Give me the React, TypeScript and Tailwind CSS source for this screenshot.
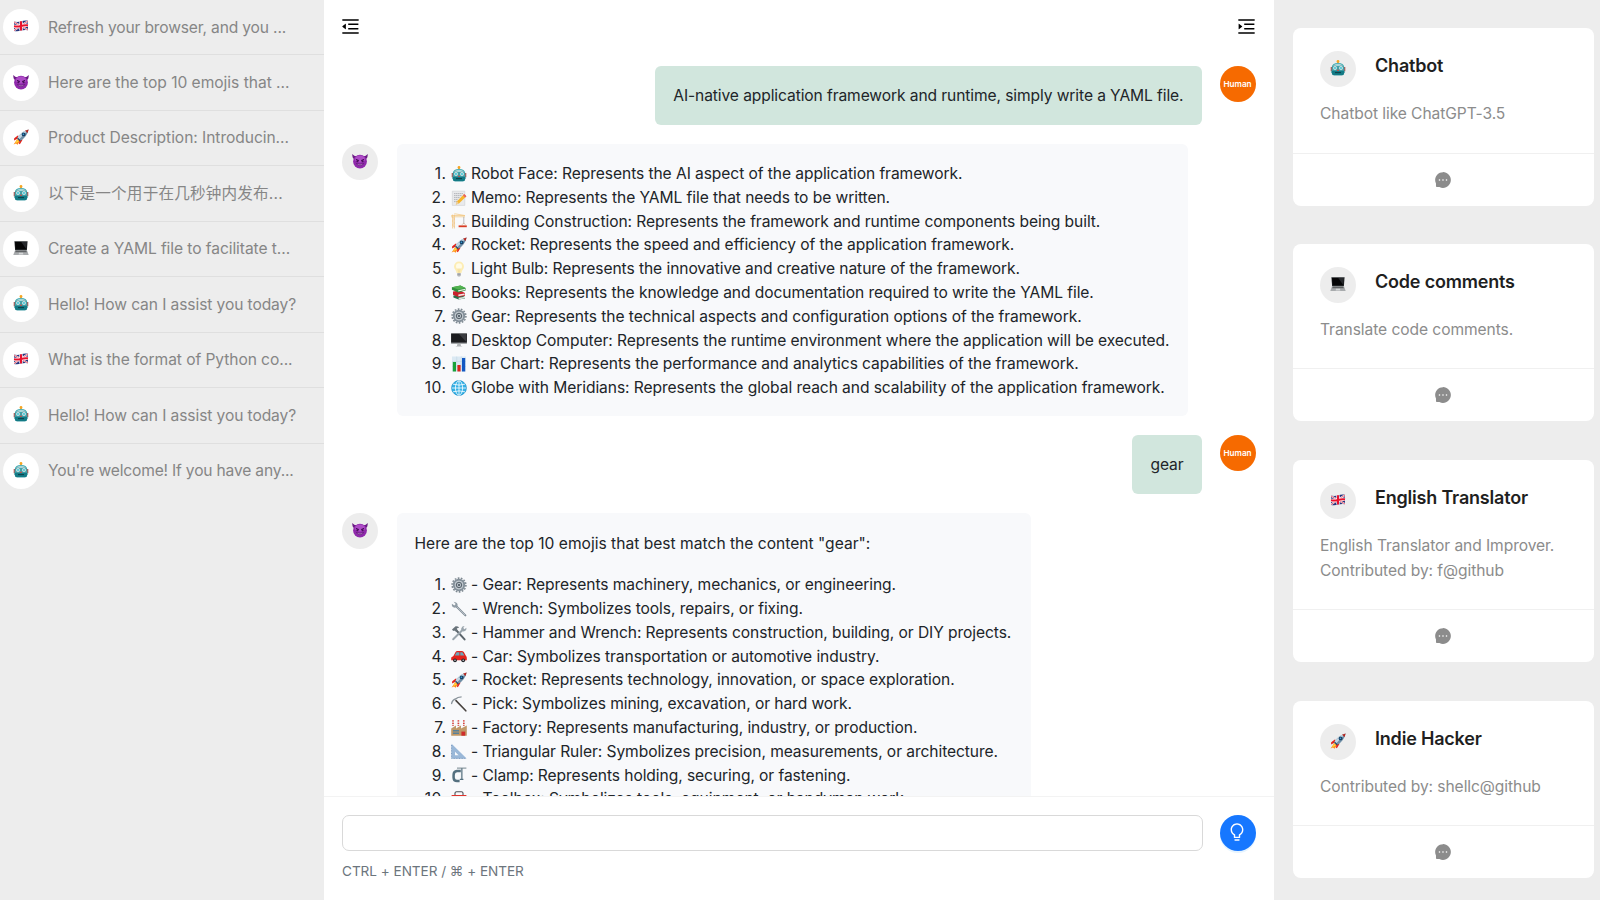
import type { ReactNode } from "react";
import { AiFillMessage, AiOutlineBulb, AiOutlineMenuFold, AiOutlineMenuUnfold } from "react-icons/ai";

type EmojiName =
  | "flag" | "devil" | "rocket" | "robot" | "laptop" | "memo" | "crane" | "bulb" | "books" | "gear"
  | "desktop" | "chart" | "globe" | "wrench" | "tools" | "car" | "pick" | "factory" | "ruler" | "clamp" | "toolbox";

const drawings: Record<EmojiName, ReactNode> = {
  flag: (
    <g>
      <path d="M1 3.6Q4.5 4.6 8 3.3T15 2.6V12.2Q11.5 11.4 8 12.6T1 12.9Z" fill="#27347d" />
      <path d="M1 4L15 12M1 12.6L15 3" stroke="#fff" strokeWidth="1.8" />
      <path d="M1 4L15 12M1 12.6L15 3" stroke="#e0142f" strokeWidth=".7" />
      <path d="M8 3.3V12.6M1 8.2Q4.5 8.8 8 7.9T15 7.4" stroke="#fff" strokeWidth="3.4" fill="none" />
      <path d="M8 3.3V12.6M1 8.2Q4.5 8.8 8 7.9T15 7.4" stroke="#e8112d" strokeWidth="2.1" fill="none" />
    </g>
  ),
  devil: (
    <g>
      <path d="M.3 .9Q.1 5.4 2.8 6.5L5 3.4Q1.8 3.2 .3 .9ZM15.7 .9Q15.9 5.4 13.2 6.5L11 3.4Q14.2 3.2 15.7 .9Z" fill="#6a1a83" />
      <circle cx="8" cy="8.6" r="6.9" fill="#8f29ab" />
      <ellipse cx="8" cy="6" rx="5.2" ry="3.6" fill="#ad4cc6" />
      <path d="M3.8 6.2L7 7.6M12.2 6.2L9 7.6" stroke="#4b0e5e" strokeWidth="1" />
      <circle cx="5.4" cy="8.2" r="1.1" fill="#4b0e5e" />
      <circle cx="10.6" cy="8.2" r="1.1" fill="#4b0e5e" />
      <path d="M4.2 10.5Q8 14.6 11.8 10.5Q8 12.3 4.2 10.5Z" fill="#e7c7ef" stroke="#4b0e5e" strokeWidth=".5" />
    </g>
  ),
  rocket: (
    <g>
      <path d="M4.3 10L.6 15.4L3 14.6L4.6 15.8L7 12Z" fill="#ff8d1c" />
      <path d="M4 11L2 14.4L6 12.3Z" fill="#ffdf3d" />
      <path d="M5.2 6.3L1.2 9.2L1 11.4L5 9.6ZM9.7 10.6L7.2 14.8L6 15.2L6.4 11Z" fill="#e2231a" />
      <path d="M4.2 9.6Q7 3 15.6 .4Q14.2 7.9 6.9 12.1Z" fill="#6f8fa6" />
      <path d="M4.2 9.6Q7 3 15.6 .4L5.5 10.9Z" fill="#c3d6e2" />
      <path d="M12 1.7L15.6 .4L14.6 4.1Z" fill="#b5271f" />
      <circle cx="10.6" cy="5.4" r="1.9" fill="#173e63" />
      <circle cx="10.4" cy="5.2" r=".8" fill="#3aa9de" />
      <path d="M4.6 9.1L7.2 11.8" stroke="#24455f" strokeWidth="1.2" />
    </g>
  ),
  robot: (
    <g>
      <path d="M8 1.4V4" stroke="#8a5a25" strokeWidth="1" />
      <circle cx="8" cy="1.5" r="1.4" fill="#f6a623" />
      <path d="M.7 7H2.4V11.2H.7ZM13.6 7H15.3V11.2H13.6Z" fill="#b9524d" />
      <path d="M1.8 7Q2.4 3.2 8 3.1T14.2 7L14.4 12.6Q14 15.2 12 15.3H4Q2 15.2 1.6 12.6Z" fill="#3fa9b0" />
      <path d="M1.7 10.8H14.3L14.4 12.6Q14 15.3 12 15.3H4Q2 15.3 1.6 12.6Z" fill="#137a85" />
      <path d="M3 5.9Q4.5 3.8 8 3.7T13 5.9Z" fill="#a8d5d8" />
      <circle cx="5" cy="8" r="2.2" fill="#d9fbfb" stroke="#45717a" strokeWidth=".5" />
      <circle cx="11" cy="8" r="2.2" fill="#d9fbfb" stroke="#45717a" strokeWidth=".5" />
      <circle cx="5" cy="8" r=".9" fill="#28b9cc" />
      <circle cx="11" cy="8" r=".9" fill="#28b9cc" />
      <path d="M8 9L9 11H7Z" fill="#e33c35" />
      <path d="M5 12.6H11" stroke="#0d424b" strokeWidth="1.1" />
    </g>
  ),
  laptop: (
    <g>
      <path d="M1.4 1.3H14.6L13.9 9.9H2.1Z" fill="#25282b" />
      <path d="M2 1.9H14L13.4 9.2H2.6Z" fill="#050506" />
      <path d="M8.2 1.9H14L13.4 9.2Z" fill="#26282c" />
      <path d="M2.1 9.9H13.9L15.7 15H.3Z" fill="#a8abad" />
      <path d="M2.8 10.5H13.2L13.9 12.2H2.1Z" fill="#5f6264" />
      <path d="M6 12.8H10L10.3 14.4H5.7Z" fill="#d4d6d7" />
    </g>
  ),
  memo: (
    <g>
      <path d="M1.3 1.2H13.8V15.4H1.3Z" fill="#e9eaec" stroke="#c7c9cc" strokeWidth=".5" />
      <path d="M3 3.6H12M3 5.6H11M3 7.6H9M3 9.6H7M3 11.6H6" stroke="#9da1a6" strokeWidth=".7" strokeDasharray="1.6 .4" />
      <path d="M13.2 4L15.4 6.2L8 13.6L5 14.4L6 11.2Z" fill="#f7b52b" />
      <path d="M13.2 4L15.4 6.2L14.2 7.4L12 5.2Z" fill="#e8596b" />
      <path d="M6 11.2L8 13.6L4.6 14.8Z" fill="#e9cda0" />
    </g>
  ),
  crane: (
    <g>
      <path d="M1.6 15.5V1.6M3.4 15.5V1.6M1.6 4L3.4 6L1.6 8L3.4 10L1.6 12L3.4 14" stroke="#f0bf72" strokeWidth=".7" fill="none" />
      <path d="M.2 2.5H14M3.4 .7L13.8 2.5M0 3.8H14" stroke="#f2c47a" strokeWidth=".7" fill="none" />
      <path d="M12.8 3.8V11" stroke="#8d8f92" strokeWidth=".6" />
      <path d="M7.6 12.4H15.8V14.2H7.6Z" fill="#d83b23" />
      <path d="M10.4 12.2L12.8 10L14.8 12.2" stroke="#c9a77a" strokeWidth=".5" fill="none" />
    </g>
  ),
  bulb: (
    <g>
      <path d="M8 .5A5 5 0 0 1 13 5.6C13 8.3 10.8 9 10.4 12H5.6C5.2 9 3 8.3 3 5.6A5 5 0 0 1 8 .5Z" fill="#fdedb4" />
      <circle cx="8" cy="5.2" r="3" fill="#fffbe6" />
      <path d="M7 7L7.5 11.6M9 7L8.5 11.6" stroke="#e6c777" strokeWidth=".4" />
      <path d="M6.3 12H9.7V14.4L9 15.5H7L6.3 14.4Z" fill="#b4b6b8" />
      <path d="M6.3 13.3H9.7" stroke="#85878a" strokeWidth=".5" />
    </g>
  ),
  books: (
    <g>
      <path d="M2.4 10.6L9 9.4L14 12V13.4L7.6 14.6L2.4 12.4Z" fill="#2a6f4b" />
      <path d="M7.6 12.7L14 11.8V13.3L7.6 14.4Z" fill="#dfe5e0" />
      <path d="M2 6.6L9 5.6L14 8V10.8L7.4 12.1L2 9.8Z" fill="#c9222d" />
      <path d="M7.4 9.6L13.6 8.6V10L7.4 11.2Z" fill="#f1e7e3" />
      <path d="M.9 2.2L9.4 .6L14.6 3V5.6L7.2 7.4L.9 4.8Z" fill="#2f8f3d" />
      <path d="M.9 2.2L9.4 .6L14.6 3L7.2 4.6Z" fill="#52b350" />
      <path d="M7.2 5.2L14.2 3.8V5L7.2 6.6Z" fill="#e8eee4" />
    </g>
  ),
  gear: (
    <g>
      <circle cx="8" cy="8" r="6.9" fill="none" stroke="#7d8890" strokeWidth="1.6" strokeDasharray="1.7 1.4" />
      <circle cx="8" cy="8" r="5.2" fill="none" stroke="#84909a" strokeWidth="2" />
      <circle cx="8" cy="8" r="4" fill="#b6bfc6" />
      <circle cx="8" cy="8" r="2.7" fill="none" stroke="#59646d" strokeWidth="1" />
      <circle cx="8" cy="8" r="1.1" fill="#46515a" />
    </g>
  ),
  desktop: (
    <g>
      <path d="M.1 1.5H15.9V11.9H.1Z" fill="#9a9da0" />
      <path d="M.1 1.5H15.9V10.6H.1Z" fill="#1b1c1f" />
      <path d="M8 2.1H15.3V10Z" fill="#3a3c40" />
      <path d="M6.4 11.9H9.6L10.2 14.4H5.8Z" fill="#b1b4b7" />
      <path d="M4.8 14.2H11.2V15H4.8Z" fill="#d4d6d8" />
    </g>
  ),
  chart: (
    <g>
      <path d="M1 .5H15V15.5H1Z" fill="#dbe9f3" />
      <path d="M1 5.5H15M1 10.5H15M5.7 .5V15.5M10.3 .5V15.5" stroke="#b9cfdf" strokeWidth=".4" />
      <path d="M1.8 6H5V15.5H1.8Z" fill="#1aa13a" />
      <path d="M6.4 9H9.6V15.5H6.4Z" fill="#d8261d" />
      <path d="M11 2H14.2V15.5H11Z" fill="#1458c2" />
    </g>
  ),
  globe: (
    <g fill="none" stroke="#fff" strokeWidth=".8">
      <circle cx="8" cy="8" r="7.4" fill="#35b1e6" stroke="#2496cc" />
      <ellipse cx="8" cy="8" rx="3.6" ry="7.2" />
      <path d="M8 .8V15.2M.8 8H15.2M2 4.2Q8 6 14 4.2M2 11.8Q8 10 14 11.8" />
    </g>
  ),
  wrench: (
    <g>
      <path d="M5.5 5.5L14.4 14.4" stroke="#7f8b94" strokeWidth="2" strokeLinecap="round" />
      <path d="M5 5L13.8 13.8" stroke="#b9c3ca" strokeWidth=".9" strokeLinecap="round" />
      <path d="M2.6 .8L4.7 3L3.4 4.5L.9 2.8Q.4 6 3 6.6Q6 7 6.6 4.6Q7 1.4 2.6 .8Z" fill="#909ca5" />
    </g>
  ),
  tools: (
    <g>
      <path d="M4.8 4.8L13.6 14.4" stroke="#5b646b" strokeWidth="2" strokeLinecap="round" />
      <path d="M12 4.5L2.2 14.2" stroke="#9aa5ad" strokeWidth="2" strokeLinecap="round" />
      <path d="M1 4.6L4.6 1.2Q7 1 8.2 2.6L5.8 3.6L6.4 5.2L4.6 6.6L3.2 5.4L2.2 6Z" fill="#69737a" />
      <path d="M13.6 1L12.2 3L13.4 4.2L15.4 2.8Q15.8 6 12.6 6.4Q10 6 10.2 3.4Q11 1 13.6 1Z" fill="#9aa5ad" />
    </g>
  ),
  car: (
    <g>
      <path d="M.2 9.5L2.4 8L4.6 4Q5 3 6.4 3H10.6Q12 3 12.8 4L15 8Q15.8 8.6 15.8 10V12.2H.2Z" fill="#e3231c" />
      <path d="M3.8 7.6L5.6 4.3H8.4V7.6ZM9.3 4.3H11.4L13.4 7.6H9.3Z" fill="#6ba6b8" />
      <circle cx="4" cy="12.3" r="1.9" fill="#23262a" />
      <circle cx="12.2" cy="12.3" r="1.9" fill="#23262a" />
      <circle cx="4" cy="12.3" r=".8" fill="#c8ccd0" />
      <circle cx="12.2" cy="12.3" r=".8" fill="#c8ccd0" />
    </g>
  ),
  pick: (
    <g>
      <path d="M5 4.6L14.8 14.8" stroke="#47423f" strokeWidth="1.6" strokeLinecap="round" />
      <path d="M.4 8Q1.6 3.4 4.6 3Q6.4 .9 10.6 .8" stroke="#8b959c" strokeWidth="1.3" fill="none" />
    </g>
  ),
  factory: (
    <g>
      <path d="M2 .2V6M7.4 .2V6M12.8 .2V6" stroke="#e9dcd6" strokeWidth="1.6" />
      <path d="M2 .2V6M7.4 .2V6M12.8 .2V6" stroke="#dd3c39" strokeWidth="1.6" strokeDasharray="1.3 1.2" />
      <path d="M.2 8.6L5 5.6V8.6L10 5.6V8.6L15.8 5.6V15.7H.2Z" fill="#c09867" />
      <path d="M2 10H8V11.4H2ZM2 12.6H8V14H2Z" fill="#57819b" />
      <path d="M10.4 11.6H14.2V15.7H10.4Z" fill="#cf2d2b" />
    </g>
  ),
  ruler: (
    <g>
      <path d="M.6 .8L15.6 15.4H.6ZM4 8.8V12.2H7.6Z" fill="#9ab8d8" fillRule="evenodd" />
      <path d="M.6 2V15.4H14.8" stroke="#7b9bc0" strokeWidth="1" fill="none" strokeDasharray="1 .6" />
    </g>
  ),
  clamp: (
    <g>
      <path d="M9.8 4H6Q2.6 4.2 2.6 8V10.6Q2.8 14 6 14H8.6" stroke="#54707f" strokeWidth="2.5" fill="none" />
      <path d="M10.8 1V12.6" stroke="#7d929d" strokeWidth="1.7" />
      <path d="M6 1.1H15.4" stroke="#75858e" strokeWidth="1" />
      <path d="M8.8 12.4H12.4" stroke="#54707f" strokeWidth="1.2" />
    </g>
  ),
  toolbox: (
    <g>
      <path d="M4 4V2Q4.1 .8 5.5 .8H10.5Q11.9 .8 12 2V4" stroke="#4c5055" strokeWidth="1.1" fill="none" />
      <path d="M.6 4H15.4V14.4H.6Z" fill="#e0342d" />
      <path d="M.6 8H15.4V9H.6Z" fill="#8d1f1b" />
    </g>
  ),
};

function Emoji({ name, className }: { name: EmojiName; className: string }) {
  return (
    <svg viewBox="0 0 16 16" className={className} fill="none" aria-hidden="true">
      {drawings[name]}
    </svg>
  );
}

function Avatar({ name, className }: { name: EmojiName; className: string }) {
  return (
    <div className={`flex size-9 shrink-0 items-center justify-center rounded-full pb-0.5 ${className}`}>
      <Emoji name={name} className="size-4" />
    </div>
  );
}

const history: { icon: EmojiName; text: string; tracking: string }[] = [
  { icon: "flag", text: "Refresh your browser, and you ...", tracking: "tracking-[-0.16px]" },
  { icon: "devil", text: "Here are the top 10 emojis that ...", tracking: "tracking-[-0.03px]" },
  { icon: "rocket", text: "Product Description: Introducin...", tracking: "tracking-[-0.06px]" },
  { icon: "robot", text: "以下是一个用于在几秒钟内发布...", tracking: "tracking-[0.18px]" },
  { icon: "laptop", text: "Create a YAML file to facilitate t...", tracking: "tracking-[-0.08px]" },
  { icon: "robot", text: "Hello! How can I assist you today?", tracking: "tracking-[-0.1px]" },
  { icon: "flag", text: "What is the format of Python co...", tracking: "tracking-[-0.08px]" },
  { icon: "robot", text: "Hello! How can I assist you today?", tracking: "tracking-[-0.1px]" },
  { icon: "robot", text: "You're welcome! If you have any...", tracking: "tracking-[-0.18px]" },
];

type Item = { icon: EmojiName; text: string };

const firstAnswer: Item[] = [
  { icon: "robot", text: "Robot Face: Represents the AI aspect of the application framework." },
  { icon: "memo", text: "Memo: Represents the YAML file that needs to be written." },
  { icon: "crane", text: "Building Construction: Represents the framework and runtime components being built." },
  { icon: "rocket", text: "Rocket: Represents the speed and efficiency of the application framework." },
  { icon: "bulb", text: "Light Bulb: Represents the innovative and creative nature of the framework." },
  { icon: "books", text: "Books: Represents the knowledge and documentation required to write the YAML file." },
  { icon: "gear", text: "Gear: Represents the technical aspects and configuration options of the framework." },
  { icon: "desktop", text: "Desktop Computer: Represents the runtime environment where the application will be executed." },
  { icon: "chart", text: "Bar Chart: Represents the performance and analytics capabilities of the framework." },
  { icon: "globe", text: "Globe with Meridians: Represents the global reach and scalability of the application framework." },
];

const secondAnswer: Item[] = [
  { icon: "gear", text: "- Gear: Represents machinery, mechanics, or engineering." },
  { icon: "wrench", text: "- Wrench: Symbolizes tools, repairs, or fixing." },
  { icon: "tools", text: "- Hammer and Wrench: Represents construction, building, or DIY projects." },
  { icon: "car", text: "- Car: Symbolizes transportation or automotive industry." },
  { icon: "rocket", text: "- Rocket: Represents technology, innovation, or space exploration." },
  { icon: "pick", text: "- Pick: Symbolizes mining, excavation, or hard work." },
  { icon: "factory", text: "- Factory: Represents manufacturing, industry, or production." },
  { icon: "ruler", text: "- Triangular Ruler: Symbolizes precision, measurements, or architecture." },
  { icon: "clamp", text: "- Clamp: Represents holding, securing, or fastening." },
  { icon: "toolbox", text: "- Toolbox: Symbolizes tools, equipment, or handyman work." },
];

const bots: { icon: EmojiName; title: string; lines: string[] }[] = [
  { icon: "robot", title: "Chatbot", lines: ["Chatbot like ChatGPT-3.5"] },
  { icon: "laptop", title: "Code comments", lines: ["Translate code comments."] },
  { icon: "flag", title: "English Translator", lines: ["English Translator and Improver.", "Contributed by: f@github"] },
  { icon: "rocket", title: "Indie Hacker", lines: ["Contributed by: shellc@github"] },
];

function Numbered({ items }: { items: Item[] }) {
  return (
    <ol>
      {items.map((item, i) => (
        <li key={item.text} className="flex h-[23.77px] items-center whitespace-nowrap">
          <span className="w-[32px] shrink-0 text-right tracking-[0.5px]">{i + 1}.</span>
          <Emoji name={item.icon} className="mr-1 ml-[4.5px] size-4 shrink-0" />
          <span>{item.text}</span>
        </li>
      ))}
    </ol>
  );
}

function Human({ children }: { children: ReactNode }) {
  return (
    <div className="flex items-start justify-end gap-[18px]">
      <div className="flex h-[59.5px] items-center rounded-md bg-[#d1e6dd] px-[18px] pb-[0.4px] tracking-[-0.1px] whitespace-nowrap">
        {children}
      </div>
      <div className="flex size-9 shrink-0 items-center justify-center rounded-full bg-[#f66a00] text-[8.2px] font-semibold tracking-normal text-white">
        Human
      </div>
    </div>
  );
}

function Bot({ width, children }: { width: string; children: ReactNode }) {
  return (
    <div className="flex items-start gap-[18.5px]">
      <Avatar name="devil" className="bg-[#ededed]" />
      <div className={`rounded-md bg-[#f8f9fb] px-[18px] pt-[18.2px] pb-[16.8px] ${width}`}>{children}</div>
    </div>
  );
}

export default function App() {
  return (
    <div className="flex h-[900px] w-[1600px] overflow-hidden bg-white font-['Inter','Noto_Sans_CJK_SC',sans-serif] text-[15.6px] tracking-[-0.078px] text-[#212529]">
      <aside className="w-[324px] shrink-0 bg-[#ededed] text-[#868686]">
        <ul>
          {history.map((row, i) => (
            <li
              key={i}
              className="flex h-[55.45px] items-center gap-[9px] border-b border-[#dfdfdf] pl-[3px] whitespace-nowrap last:border-transparent"
            >
              <Avatar name={row.icon} className="bg-white" />
              <span className={row.tracking}>{row.text}</span>
            </li>
          ))}
        </ul>
      </aside>

      <main className="flex w-[950px] shrink-0 flex-col">
        <header className="flex h-[65.8px] shrink-0 items-start justify-between pt-[16.4px] pr-[17.2px] pl-4 text-black">
          <AiOutlineMenuFold className="size-[21px]" />
          <AiOutlineMenuUnfold className="size-[21px]" />
        </header>
        <section className="flex min-h-0 flex-1 flex-col gap-[18.5px] overflow-hidden pr-[18.5px] pl-[18px]">
          <Human>AI-native application framework and runtime, simply write a YAML file.</Human>
          <Bot width="w-[791px]">
            <Numbered items={firstAnswer} />
          </Bot>
          <Human>gear</Human>
          <Bot width="w-[634.5px]">
            <p className="mb-[17.3px] h-[24.77px] pt-px leading-[23.77px] tracking-[0.005px]">
              Here are the top 10 emojis that best match the content "gear":
            </p>
            <Numbered items={secondAnswer} />
          </Bot>
        </section>
        <footer className="h-[104px] shrink-0 border-t border-[#f3f3f3] px-[18px] pt-[18px]">
          <div className="flex gap-[17px]">
            <input className="h-9 w-[860.5px] rounded-[7px] border border-[#d9d9d9] bg-white px-3 outline-none" aria-label="Message" />
            <button className="flex size-9 shrink-0 items-center justify-center rounded-full bg-[#1677ff] text-white shadow-[0_2px_0_rgba(5,145,255,0.1)]">
              <AiOutlineBulb className="-mt-0.5 -ml-px size-5" />
            </button>
          </div>
          <p className="mt-2.5 text-[13.6px] leading-5 tracking-[-0.04px] text-[#6c757d]">CTRL + ENTER / ⌘ + ENTER</p>
        </footer>
      </main>

      <aside className="flex w-[326px] shrink-0 flex-col gap-[38.3px] bg-[#ededed] pt-7 pr-1.5 pl-[19px]">
        {bots.map((bot) => (
          <article key={bot.title} className="shrink-0 rounded-lg bg-white">
            <div className="px-[27px] pt-[23px] pb-[26.4px]">
              <div className="flex gap-[19px]">
                <Avatar name={bot.icon} className="bg-[#ededed]" />
                <h2 className="text-[18px] leading-[29px] font-semibold tracking-[-0.2px] whitespace-nowrap text-[#1f1f1f]">{bot.title}</h2>
              </div>
              <div className="mt-[14px] leading-[25.14px] whitespace-nowrap text-[#8c8c8c]">
                {bot.lines.map((line) => (
                  <p key={line}>{line}</p>
                ))}
              </div>
            </div>
            <div className="flex h-[53px] items-center justify-center border-t border-[#f0f0f0] pr-0.5 text-[#8c8c8c]">
              <AiFillMessage className="size-[18px]" />
            </div>
          </article>
        ))}
      </aside>
    </div>
  );
}
